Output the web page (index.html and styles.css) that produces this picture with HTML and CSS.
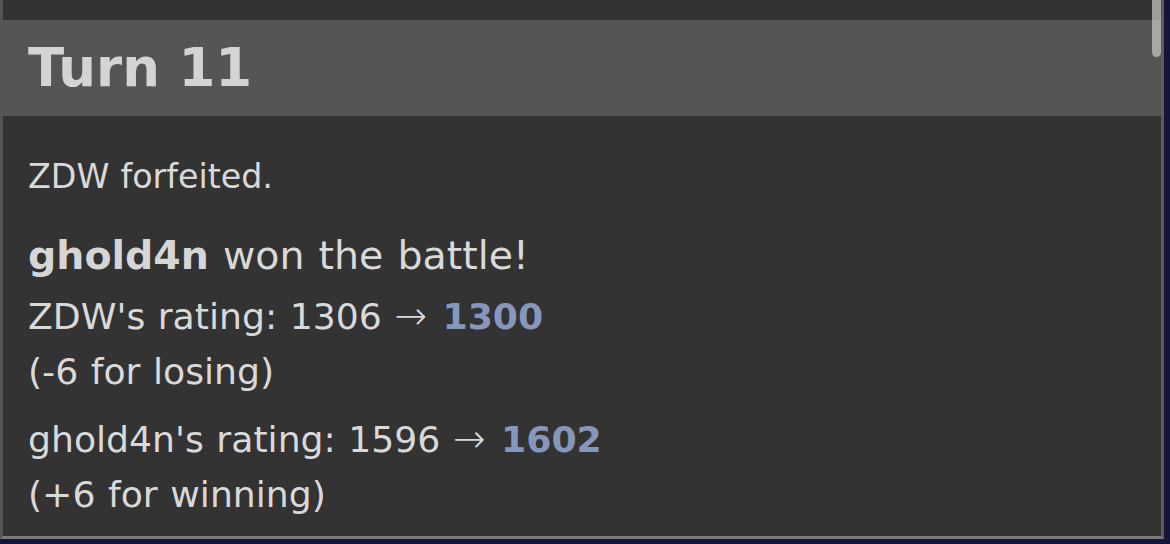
FILE: index.html
```html
<!DOCTYPE html>
<html>
<head>
<meta charset="utf-8">
<link rel="stylesheet" href="styles.css">
</head>
<body>
<div class="log">
  <div class="prev"></div>
  <h2 class="turn">Turn 11</h2>
  <div class="entries">
    <div class="history">ZDW forfeited.</div>
    <div class="won"><strong>ghold4n</strong> won the battle!</div>
    <div class="rating">ZDW's rating: 1306 <span class="arrow">&rarr;</span> <strong class="num">1300</strong><br>(-6 for losing)</div>
    <div class="rating">ghold4n's rating: 1596 <span class="arrow">&rarr;</span> <strong class="num">1602</strong><br>(+6 for winning)</div>
  </div>
  <div class="scrollbar"></div>
</div>
</body>
</html>
```

FILE: styles.css
```css
html, body {
  margin: 0;
  padding: 0;
}
body {
  width: 1170px;
  height: 544px;
  overflow: hidden;
  background: #13153a;
  font-family: "DejaVu Sans", Verdana, sans-serif;
}
.log {
  position: relative;
  box-sizing: border-box;
  width: 1164px;
  height: 539px;
  overflow: hidden;
  background: #333333;
  border-left: 3px solid #555555;
  border-right: 3px solid #5c5c5c;
  border-bottom: 3px solid #7a7a7a;
  color: #d9d9d9;
}
.prev {
  height: 20px;
}
.turn {
  margin: 0;
  height: 96px;
  line-height: 96px;
  padding-left: 25px;
  background: #555555;
  color: #d4d4d4;
  font-size: 53px;
  font-weight: bold;
}
.entries {
  padding: 36px 0 0 25px;
}
.history {
  font-size: 33.3px;
  line-height: 50px;
  word-spacing: 0.5px;
}
.won {
  margin-top: 26px;
  font-size: 39.5px;
  line-height: 55px;
  word-spacing: 1.5px;
}
.won strong {
  color: #d6d6d6;
}
.rating {
  font-size: 36.2px;
  line-height: 55px;
  margin-top: 6px;
  word-spacing: 1px;
}
.rating + .rating {
  margin-top: 13px;
}
.arrow {
  font-weight: 200;
  font-size: 39px;
  line-height: 0;
  margin-right: 3px;
}
.num {
  color: #8797bb;
}
.scrollbar {
  position: absolute;
  top: 0;
  right: 0;
  width: 9px;
  height: 57px;
  border-radius: 0 0 5px 5px;
  background: rgba(200, 200, 200, 0.72);
}
```
